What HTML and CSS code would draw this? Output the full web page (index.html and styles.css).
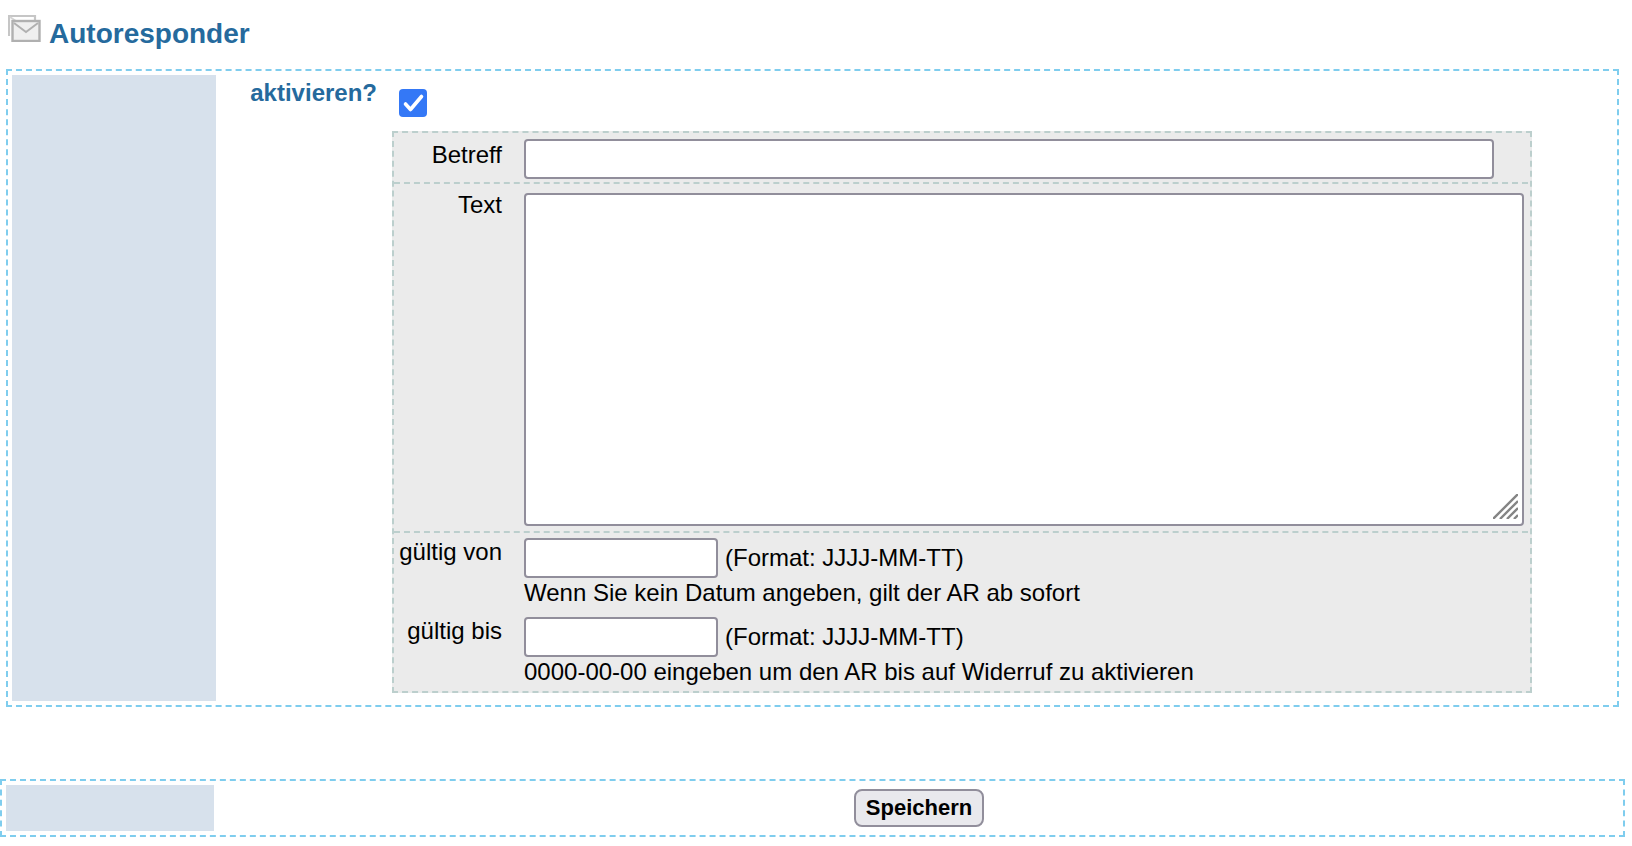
FILE: index.html
```html
<!DOCTYPE html>
<html lang="de">
<head>
<meta charset="utf-8">
<title>Autoresponder</title>
<link rel="stylesheet" href="styles.css">
</head>
<body>
<header class="title">
  <svg class="title-icon" width="33" height="28" viewBox="0 0 33 28" fill="none">
    <path d="M1 22V2h26v5" stroke="#c6c6c6" stroke-width="2.2"/>
    <path d="M2 3l9 6" stroke="#d4d4d4" stroke-width="1.6"/>
    <rect x="4.5" y="7" width="27" height="20" fill="#efefef" stroke="#b0b0b0" stroke-width="2.4"/>
    <path d="M6 9l12 9 12-9" stroke="#b0b0b0" stroke-width="2"/>
  </svg>
  <h1 class="heading">Autoresponder</h1>
</header>
<main class="panel panel-main">
  <div class="side"></div>
  <section class="content">
    <div class="activate">
      <label class="activate-label">aktivieren?</label>
      <svg class="check" width="28" height="28" viewBox="0 0 28 28">
        <rect width="28" height="28" rx="4" fill="#3478f6"/>
        <path d="M6.5 15l5 5.5 11-13" fill="none" stroke="#fff" stroke-width="3.6" stroke-linecap="round" stroke-linejoin="round"/>
      </svg>
    </div>
    <div class="fields">
      <div class="row row-subject">
        <label class="field-label label-subject">Betreff</label>
        <div class="field-body"><input class="input input-subject" type="text"></div>
      </div>
      <div class="row row-text">
        <label class="field-label label-text">Text</label>
        <div class="field-body textarea-wrap">
          <textarea class="input textarea"></textarea>
          <svg class="grip" width="25" height="25" viewBox="0 0 25 25" stroke="#858585" stroke-width="2.4">
            <path d="M0 25L25 0M7 25L25 7M14 25L25 14M21 25l4-4"/>
          </svg>
        </div>
      </div>
      <div class="row-date row-from">
        <label class="field-label">gültig von</label>
        <div class="field-body">
          <div class="date-line"><input class="input input-date" type="text"><span>(Format: JJJJ-MM-TT)</span></div>
          <div class="hint">Wenn Sie kein Datum angeben, gilt der AR ab sofort</div>
        </div>
      </div>
      <div class="row-date">
        <label class="field-label">gültig bis</label>
        <div class="field-body">
          <div class="date-line"><input class="input input-date" type="text"><span>(Format: JJJJ-MM-TT)</span></div>
          <div class="hint">0000-00-00 eingeben um den AR bis auf Widerruf zu aktivieren</div>
        </div>
      </div>
    </div>
  </section>
</main>
<footer class="panel panel-foot">
  <div class="side side-foot"></div>
  <div class="actions"><button class="save" type="button">Speichern</button></div>
</footer>
</body>
</html>
```
FILE: styles.css
```css
* { box-sizing: border-box; }
body {
  margin: 0;
  background: #fff;
  color: #000;
  font-family: "Liberation Sans", Arial, sans-serif;
  font-size: 24px;
}
.title {
  display: flex;
  height: 69px;
  padding: 14px 0 0 8px;
}
.title-icon {
  flex: none;
  filter: blur(0.4px);
}
.heading {
  margin: 4px 0 0 8px;
  color: #256a9d;
  font-size: 28px;
  line-height: 32px;
  font-weight: bold;
}
.panel {
  display: flex;
  border: 2px dashed #7fcdee;
  padding: 4px;
}
.panel-main {
  width: 1613px;
  height: 638px;
  margin-left: 6px;
}
.panel-foot {
  width: 1625px;
  height: 58px;
  margin-top: 72px;
}
.side {
  flex: none;
  width: 204px;
  background: #d7e1ec;
}
.side-foot { width: 208px; }
.content { flex: 1; }
.activate {
  display: flex;
  height: 56px;
}
.activate-label {
  width: 161px;
  margin-top: 4px;
  text-align: right;
  color: #256a9d;
  font-weight: bold;
  line-height: 28px;
}
.check { margin: 14px 0 0 22px; }
.fields {
  width: 1140px;
  height: 562px;
  margin-left: 176px;
  border: 2px dashed #bccfcd;
  background: #ebebeb;
}
.row, .row-date {
  display: flex;
  margin-right: 2px;
}
.row { border-bottom: 2px dashed #bccfcd; }
.row-subject { height: 51px; padding-top: 6px; }
.row-text { height: 349px; padding-top: 9px; }
.row-from { height: 84px; padding-top: 5px; }
.field-label {
  flex: none;
  width: 108px;
  margin-right: 22px;
  text-align: right;
  line-height: 28px;
}
.label-subject { margin-top: 2px; }
.label-text { margin-top: -2px; }
.field-body { flex: 1; min-width: 0; }
.input {
  display: block;
  margin: 0;
  border: 2px solid #918e9b;
  border-radius: 4px;
  background: #fff;
  font: inherit;
}
.input-subject { width: 970px; height: 40px; }
.textarea-wrap { position: relative; }
.textarea {
  width: 1000px;
  height: 333px;
  resize: none;
}
.grip {
  position: absolute;
  left: 969px;
  bottom: 12px;
}
.date-line {
  display: flex;
  align-items: center;
  column-gap: 7px;
  line-height: 28px;
}
.input-date { width: 194px; height: 40px; }
.hint { line-height: 30px; }
.actions {
  flex: 1;
  display: flex;
  justify-content: center;
  padding: 4px 0 0 0;
}
.save {
  width: 130px;
  height: 38px;
  margin: 0 0 0 5px;
  padding: 0;
  border: 2px solid #918e9b;
  border-radius: 8px;
  background: #e9e9ed;
  color: #000;
  font: bold 22px "Liberation Sans", Arial, sans-serif;
}
```
